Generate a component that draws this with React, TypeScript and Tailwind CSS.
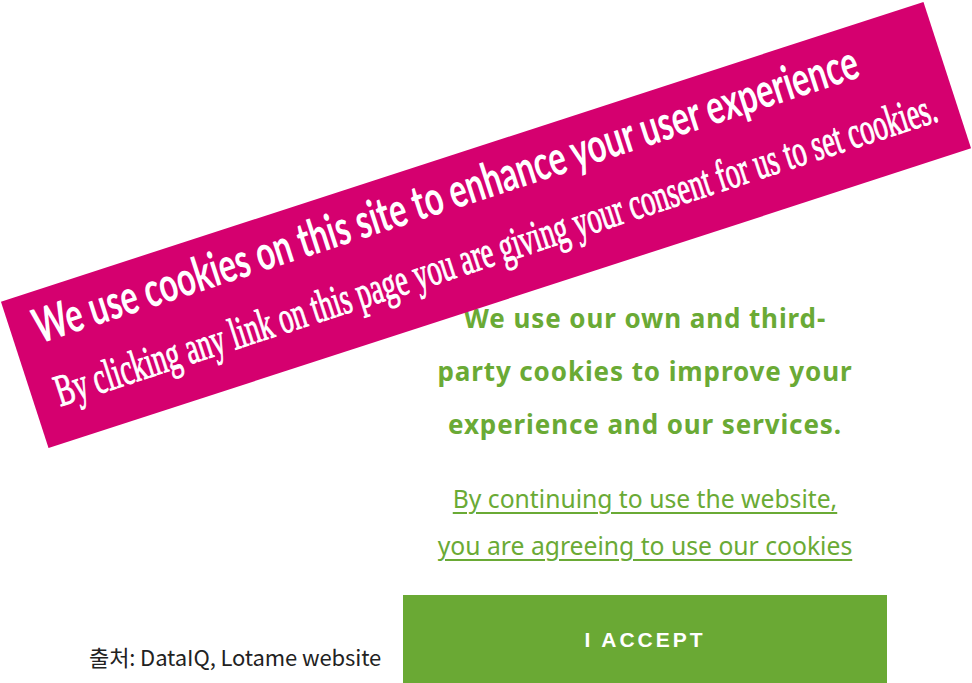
import { useLayoutEffect, useRef, useState } from "react";

type FitProps = {
    text: string,
    width: number,
    className?: string
}

// squeezes a line horizontally so it spans the given width
function FitLine({ text, width, className }: FitProps) {
    const ref = useRef<HTMLSpanElement>(null);
    const [scale, setScale] = useState(1);

    useLayoutEffect(() => {
        if (ref.current) {
            const w = ref.current.offsetWidth;
            if (w > 0) setScale(width / w);
        }
    }, [text, width]);

    return (
        <span
            ref={ref}
            className={"inline-block whitespace-nowrap origin-left " + (className ?? "")}
            style={{ transform: `scaleX(${scale})` }}
        >
            {text}
        </span>
    );
}

function CookieBanner() {
    return (
        <div className="absolute left-[1px] top-[148px] w-[970px] h-[154px] -rotate-[18deg] bg-[#d5006f] text-white">
            <div className="flex flex-col pl-[24px] pt-[10px]">
                <div className="h-[48px] leading-none text-[48px] font-bold font-['Lato',sans-serif]">
                    <FitLine text="We use cookies on this site to enhance your user experience" width={864} />
                </div>
                <div className="mt-[23px] h-[45px] leading-none text-[45px] font-['Liberation_Serif',serif] [-webkit-text-stroke:1px_white]">
                    <FitLine text="By clicking any link on this page you are giving your consent for us to set cookies." width={925} />
                </div>
            </div>
        </div>
    );
}

function App() {
    return (
        <div className="relative w-[972px] h-[683px] overflow-hidden bg-white flex flex-row">
            <div className="w-[403px] flex flex-col justify-end pl-[89px] pb-[13px]">
                <p className="text-[22px] leading-[28px] text-[#222] font-['Noto_Sans_CJK_KR',sans-serif] tracking-[-0.1px]">
                    출처: DataIQ, Lotame website
                </p>
            </div>

            <div className="w-[484px] flex flex-col items-center pt-[292px] font-['Noto_Sans',sans-serif] text-[#6aaa35]">
                <h2 className="text-[26px] leading-[53px] font-bold tracking-[0.9px] text-center">
                    We use our own and third-<br />
                    party cookies to improve your<br />
                    experience and our services.
                </h2>
                <a className="mt-[24px] text-[24.7px] leading-[47px] text-center underline decoration-2 underline-offset-4 cursor-pointer">
                    By continuing to use the website,<br />
                    you are agreeing to use our cookies
                </a>
                <button className="mt-[26px] w-full h-[100px] shrink-0 bg-[#6aa934] text-white flex justify-center items-start pt-[34px]">
                    <span className="text-[21px] leading-none font-bold tracking-[3px] font-['Liberation_Sans',Arial,sans-serif]">I ACCEPT</span>
                </button>
            </div>

            <CookieBanner />
        </div>
    );
} export default App;
